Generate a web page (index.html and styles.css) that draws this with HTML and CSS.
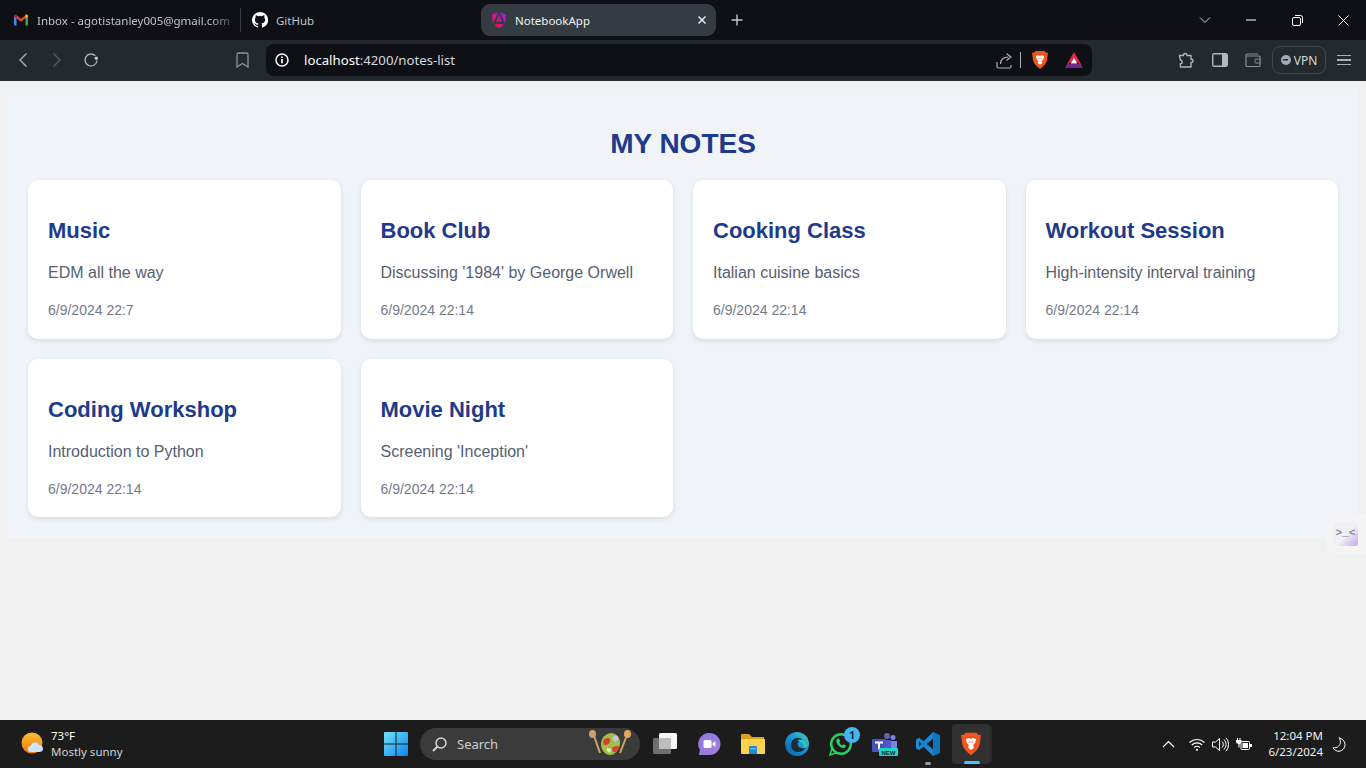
FILE: index.html
```html
<!DOCTYPE html>
<html lang="en">
<head>
<meta charset="utf-8">
<title>NotebookApp</title>
<link rel="stylesheet" href="styles.css">
</head>
<body>
<div class="window">
  <div class="tabstrip">
    <div class="tab tab-first">
      <svg class="fav" viewBox="0 0 16 16"><path fill="#4285f4" d="M1 13.500V4l2.500-.8V13.500H2a1 1 0 0 1-1-1z"/><path fill="#34a853" d="M12.500 13.500V3.200L15 4v8.500a1 1 0 0 1-1 1z"/><path fill="#ea4335" d="M3.500 3.200 8 6.700l4.500-3.500v3.100L8 9.800 3.500 6.300z"/><path fill="#c5221f" d="M1 4c0-1.300 1.500-2 2.500-1.200V6.300L1 4.500z"/><path fill="#fbbc04" d="M15 4c0-1.300-1.500-2-2.500-1.200V6.300L15 4.500z"/></svg>
      <span class="tab-title faded">Inbox - agotistanley005@gmail.com</span>
    </div>
    <div class="tab-sep"></div>
    <div class="tab tab-second">
      <svg class="fav" viewBox="0 0 16 16"><path fill="#fff" d="M8 0a8 8 0 0 0-2.530 15.590c.4.070.55-.170.55-.380v-1.340c-2.230.480-2.700-1.070-2.700-1.070-.360-.930-.890-1.170-.890-1.170-.730-.500.050-.490.050-.490.800.060 1.220.830 1.220.830.720 1.220 1.870.870 2.330.660.070-.520.280-.870.510-1.070-1.780-.200-3.640-.890-3.640-3.950 0-.870.310-1.590.820-2.150-.080-.200-.360-1.020.080-2.120 0 0 .670-.210 2.200.820a7.600 7.600 0 0 1 4 0c1.530-1.040 2.200-.820 2.200-.820.440 1.100.160 1.920.080 2.120.510.560.820 1.270.820 2.150 0 3.070-1.870 3.750-3.650 3.950.290.250.540.740.540 1.480v2.200c0 .210.150.460.550.380A8 8 0 0 0 8 0z"/></svg>
      <span class="tab-title">GitHub</span>
    </div>
    <div class="tab tab-active">
      <svg class="fav" viewBox="0 0 16 16"><defs><linearGradient id="ang" x1="0" y1="1" x2="1" y2="0"><stop offset="0" stop-color="#f0060b"/><stop offset=".5" stop-color="#e0129f"/><stop offset="1" stop-color="#7b1fe8"/></linearGradient></defs><path fill="url(#ang)" d="M6.900.2 1 2.400l.9 9.200zM9.100.2 15 2.400l-.9 9.200zM8 15.900l-4.300-2.500 1-1.500h6.600l1 1.500zM8 2.500l3 7.500H9.500L9 8.700H7L6.500 10H5zM8 5.300 7.400 7.300h1.200z" fill-rule="evenodd"/></svg>
      <span class="tab-title active-title">NotebookApp</span>
      <svg class="tab-close" viewBox="0 0 10 10"><path d="M1.500 1.500l7 7m0-7-7 7" stroke="#e8eaed" stroke-width="1.500" fill="none"/></svg>
    </div>
    <svg class="new-tab" viewBox="0 0 12 12"><path d="M6 .5v11M.5 6h11" stroke="#c4c7cb" stroke-width="1.400" fill="none"/></svg>
    <div class="win-controls">
      <span class="win-btn"><svg width="12" height="8" viewBox="0 0 12 8"><path d="M1 1.500l5 5 5-5" stroke="#d0d2d5" fill="none"/></svg></span>
      <span class="win-btn"><svg width="10" height="2" viewBox="0 0 10 2"><path d="M0 1h10" stroke="#fff" fill="none"/></svg></span>
      <span class="win-btn"><svg width="11" height="11" viewBox="0 0 11 11"><rect x=".5" y="2.500" width="8" height="8" rx="1.500" stroke="#fff" fill="none"/><path d="M3 .5h5.500a2 2 0 0 1 2 2V8" stroke="#fff" fill="none"/></svg></span>
      <span class="win-btn"><svg width="11" height="11" viewBox="0 0 11 11"><path d="M.5.500l10 10m0-10-10 10" stroke="#fff" fill="none"/></svg></span>
    </div>
  </div>

  <div class="toolbar">
    <span class="tool-btn"><svg width="10" height="16" viewBox="0 0 10 16"><path d="M8.500 1.500 2 8l6.500 6.500" stroke="#a9b0b5" stroke-width="1.400" fill="none"/></svg></span>
    <span class="tool-btn"><svg width="10" height="16" viewBox="0 0 10 16"><path d="M1.500 1.500 8 8l-6.500 6.500" stroke="#565d62" stroke-width="1.400" fill="none"/></svg></span>
    <span class="tool-btn"><svg width="16" height="16" viewBox="0 0 16 16"><path d="M14 8.500A6 6 0 1 1 12.300 3.800" stroke="#a9b0b5" stroke-width="1.400" fill="none"/><circle cx="13.300" cy="6.300" r="1.700" fill="#c5c9cc"/></svg></span>
    <span class="bookmark"><svg width="13" height="16" viewBox="0 0 13 16"><path d="M2.500 1h8A1.500 1.500 0 0 1 12 2.500V15l-5.500-3.500L1 15V2.500A1.500 1.500 0 0 1 2.500 1z" stroke="#8d959a" stroke-width="1.300" fill="none"/></svg></span>
    <div class="address">
      <svg class="info" width="14" height="14" viewBox="0 0 14 14"><circle cx="7" cy="7" r="6" stroke="#fff" stroke-width="1.500" fill="none"/><path d="M7 6v4.200M7 3.500v1.500" stroke="#fff" stroke-width="1.700" fill="none"/></svg>
      <span class="url"><b>localhost</b>:4200/notes-list</span>
      <svg class="share" width="17" height="17" viewBox="0 0 17 17"><path d="M1 10v4.500A1.500 1.500 0 0 0 2.500 16h11a1.500 1.500 0 0 0 1.500-1.500V13M4.500 12c0-4.500 3-7 8-7M10.500 1.500 15 5l-4.500 3.500" stroke="#a9b0b5" stroke-width="1.200" fill="none"/></svg>
      <span class="addr-sep"></span>
      <svg class="brave-small" width="16" height="18" viewBox="0 0 16 18"><path fill="#f0551e" d="M3.500 0h9l1.500 1.800L16 1.500 15 9c-.5 3-3 6-7 9-4-3-6.500-6-7-9L0 1.500l2 .3z"/><path fill="#fff" d="M4 5l2.500-.8L8 5l1.500-.8L12 5l-.6 3-1.700 2 .6 2-2.300 1.800L5.700 12l.6-2-1.700-2z"/><path fill="#f0551e" d="M6.500 7h1v1h-1zM8.500 7h1v1h-1z"/></svg>
      <svg class="bat" width="18" height="16" viewBox="0 0 18 16"><path fill="#6b2a8a" d="M0 16h18l-2.500-4.300h-13z"/><path fill="#e8264c" d="M9 0 1 14l4-3.500h8l4 3.500z"/><path fill="#fff" d="M9 6l3.200 5.500H5.800z"/></svg>
    </div>
    <span class="ext ext-puzzle"><svg width="17" height="17" viewBox="0 0 17 17"><path d="M1.500 3.500H5.500C5 1 9 .5 9 3.500h4v3.800c2.500-.5 3 3.500 0 3.200V15H2.500l-.2-3.300C5 12 4.500 7.800 2.300 8z" stroke="#b1b8bc" stroke-width="1.400" fill="none" stroke-linejoin="round"/></svg></span>
    <span class="ext"><svg width="16" height="14" viewBox="0 0 16 14"><rect x=".7" y=".7" width="14.600" height="12.600" rx="1.500" stroke="#b1b8bc" stroke-width="1.400" fill="none"/><rect x="10" y="1" width="5" height="12" fill="#b1b8bc"/></svg></span>
    <span class="ext"><svg width="16" height="14" viewBox="0 0 16 14"><path d="M2 3h12a1 1 0 0 1 1 1v8.500a1 1 0 0 1-1 1H2a1 1 0 0 1-1-1V2.500A1.500 1.500 0 0 1 2.500 1H13" stroke="#899095" stroke-width="1.200" fill="none"/><rect x="10" y="6" width="5" height="4" rx="1" stroke="#899095" fill="#23292d"/></svg></span>
    <span class="vpn"><i class="vpn-dot"></i>VPN</span>
    <span class="menu"><i></i><i></i><i></i></span>
  </div>

  <div class="viewport">
    <main class="notes">
      <h1 class="notes-heading">MY NOTES</h1>
      <div class="notes-grid">
        <article class="card"><h2 class="card-title">Music</h2><p class="card-body">EDM all the way</p><p class="card-date">6/9/2024 22:7</p></article>
        <article class="card"><h2 class="card-title">Book Club</h2><p class="card-body">Discussing '1984' by George Orwell</p><p class="card-date">6/9/2024 22:14</p></article>
        <article class="card"><h2 class="card-title">Cooking Class</h2><p class="card-body">Italian cuisine basics</p><p class="card-date">6/9/2024 22:14</p></article>
        <article class="card"><h2 class="card-title">Workout Session</h2><p class="card-body">High-intensity interval training</p><p class="card-date">6/9/2024 22:14</p></article>
        <article class="card"><h2 class="card-title">Coding Workshop</h2><p class="card-body">Introduction to Python</p><p class="card-date">6/9/2024 22:14</p></article>
        <article class="card"><h2 class="card-title">Movie Night</h2><p class="card-body">Screening 'Inception'</p><p class="card-date">6/9/2024 22:14</p></article>
      </div>
    </main>
    <div class="float-widget"><span class="float-inner">&gt;_&lt;</span></div>
  </div>

  <footer class="taskbar">
    <div class="weather">
      <svg width="24" height="24" viewBox="0 0 24 24"><defs><linearGradient id="sun" x1="0" y1="0" x2="0" y2="1"><stop offset="0" stop-color="#fbbd2e"/><stop offset="1" stop-color="#f07a12"/></linearGradient></defs><circle cx="11" cy="11" r="10.500" fill="url(#sun)"/><path fill="#cfe2fb" d="M10 20a3 3 0 0 1-.3-6 4.500 4.500 0 0 1 8.500-1 3.500 3.500 0 0 1 3.800 3.500A3.500 3.500 0 0 1 19 20z"/></svg>
      <div class="weather-text"><span class="temp">73°F</span><span class="cond">Mostly sunny</span></div>
    </div>
    <div class="task-center">
      <span class="task-icon"><svg width="24" height="24" viewBox="0 0 24 24"><defs><linearGradient id="win" x1="0" y1="0" x2="1" y2="1"><stop offset="0" stop-color="#6fe3fb"/><stop offset="1" stop-color="#0a86f0"/></linearGradient></defs><path fill="url(#win)" d="M1 0h10.500v11.500H0V1a1 1 0 0 1 1-1zM12.500 0H23a1 1 0 0 1 1 1v10.500H12.500zM0 12.500h11.500V24H1a1 1 0 0 1-1-1zM12.500 12.500H24V23a1 1 0 0 1-1 1H12.500z"/></svg></span>
      <div class="search">
        <svg width="15" height="15" viewBox="0 0 15 15"><circle cx="9" cy="6" r="5" stroke="#d8d8d8" stroke-width="1.500" fill="none"/><path d="M5.500 9.500 1 14" stroke="#d8d8d8" stroke-width="1.800" fill="none"/></svg>
        <span class="search-label">Search</span>
        <svg class="salad" width="46" height="30" viewBox="0 0 46 30"><path d="M6 7l6 17M39 6l-7 18" stroke="#d3a263" stroke-width="2" fill="none"/><ellipse cx="4.500" cy="5" rx="3.500" ry="4" fill="#c9a172"/><ellipse cx="39.500" cy="5" rx="3.500" ry="4" fill="#e0a860"/><path fill="#9fbe4a" d="M13 15c0-6 5-11 10-11s10 5 9 11c-1 6-5 11-10 11s-9-5-9-11z"/><path fill="#d8412e" d="M15 13c1-4 5-5 7-3 1 3-2 7-6 6zM24 19c2-2 6-3 7-1 0 3-3 6-6 5z"/><path fill="#c9c3dd" d="M25 8c2-2 4-2 5 0 1 2-1 5-3 5-2-1-3-3-2-5z"/><path fill="#e8efd4" d="M19 19l4 1-1 4-3-2z"/></svg>
      </div>
      <span class="task-icon task-view"><svg width="24" height="24" viewBox="0 0 24 24"><rect x="0" y="6" width="18" height="16" rx="1.500" fill="#6f6f6f"/><rect x="6" y="1" width="18" height="16" rx="1.500" fill="#f6f6f6"/><rect x="6" y="6" width="12" height="11" fill="#bdbdbd"/></svg></span>
      <span class="task-icon"><svg width="24" height="24" viewBox="0 0 24 24"><defs><linearGradient id="chat" x1="0" y1="0" x2="1" y2="1"><stop offset="0" stop-color="#8a7be8"/><stop offset="1" stop-color="#a77bd8"/></linearGradient></defs><path fill="url(#chat)" d="M12.500 1a11 11 0 0 1 0 22H3c-1 0-1.500-.6-1-1.500L3 18A11 11 0 0 1 12.500 1z"/><rect x="6.500" y="8" width="8" height="8" rx="1.500" fill="#fff"/><path fill="#fff" d="M15.500 11l3-2v6l-3-2z"/></svg></span>
      <span class="task-icon"><svg width="24" height="24" viewBox="0 0 24 24"><path fill="#d9a520" d="M0 3a1 1 0 0 1 1-1h7l3 3h12v3H0z"/><path fill="#fbd24e" d="M0 7h24v14a1 1 0 0 1-1 1H1a1 1 0 0 1-1-1z"/><path fill="#2088d8" d="M8 15a1 1 0 0 1 1-1h6a1 1 0 0 1 1 1v7H8z"/><path fill="#55b6f0" d="M9 16h6v1.500H9z"/></svg></span>
      <span class="task-icon"><svg width="24" height="24" viewBox="0 0 24 24"><defs><linearGradient id="edge" x1="0" y1="1" x2="1" y2="0"><stop offset="0" stop-color="#0c59a4"/><stop offset=".6" stop-color="#1b9de2"/><stop offset="1" stop-color="#4fd4a0"/></linearGradient></defs><circle cx="12" cy="12" r="12" fill="url(#edge)"/><path fill="#1c1c1c" d="M23.500 14c-1 1.800-3.500 2.500-6 2.300-3-.2-5-2-5-4.300 0-2.700 3-3.300 6-2.300-1.500-3.500-5-4.500-8-3.500C7 7.300 5.500 10.500 6 14c.5 3.500 3.500 6 7 6 3 0 5-1 6.500-2.500z" opacity=".85"/><path fill="#39c8a8" d="M12.500 8c4-1 8 0 9 5 1 2-1 3-3.500 3 2-1.500 1-5-2-6-1.500-.5-3-1-3.500-2z"/></svg></span>
      <span class="task-icon wa"><svg width="24" height="24" viewBox="0 0 24 24"><circle cx="12" cy="12" r="9.800" stroke="#27d366" stroke-width="2.400" fill="#1c1c1c"/><path fill="#1c1c1c" stroke="#27d366" stroke-width="1.500" d="M1 23l1.800-6 4 4z"/><path fill="#27d366" d="M8.500 6.800l1.600-.3 1 2.700-1 1.200c.7 1.300 1.700 2.300 3.100 3l1.200-1.200 2.500 1.200-.3 1.700c-.8 1-2.500 1.300-4.500.3-2.500-1.200-4.300-3.200-4.700-5.600-.2-1.300.2-2.300 1.100-3z"/></svg><span class="badge">1</span></span>
      <span class="task-icon"><svg width="26" height="26" viewBox="0 0 26 26"><circle cx="15" cy="5" r="3" fill="#6264a7"/><circle cx="21" cy="6.500" r="2.500" fill="#7b83eb"/><path fill="#7b83eb" d="M17 10h8v8a3 3 0 0 1-3 3h-5z"/><path fill="#5059c9" d="M11 9h8v12h-8z"/><rect x="0" y="8" width="14" height="13" rx="1" fill="#4b53bc"/><path fill="#fff" d="M3 10.500h8v2H8v6H6v-6H3z"/><rect x="7" y="17" width="19" height="8" rx="1" fill="#1fd6c4"/><text class="new-tag" x="16.500" y="23.500" text-anchor="middle">NEW</text></svg></span>
      <span class="task-icon vscode"><svg width="24" height="24" viewBox="0 0 24 24"><path fill="#1b87d2" d="M17 0l7 3.200v17.600L17 24l-9.500-9.200L3 18.300 0 16.500v-9L3 5.700l4.500 3.500zM17 6.800 10.800 12l6.200 5.200zM3 9.500v5L5.500 12z"/><path fill="#0f6fb5" d="M17 0l7 3.200v17.600L17 24z" opacity=".75"/></svg><i class="run-dot"></i></span>
      <span class="task-icon brave-task"><svg width="20" height="24" viewBox="0 0 16 18"><path fill="#f0551e" d="M3.500 0h9l1.500 1.800L16 1.500 15 9c-.5 3-3 6-7 9-4-3-6.500-6-7-9L0 1.500l2 .3z"/><path fill="#fff" d="M4 5l2.500-.8L8 5l1.500-.8L12 5l-.6 3-1.700 2 .6 2-2.300 1.800L5.700 12l.6-2-1.700-2z"/><path fill="#f0551e" d="M6.500 7h1v1h-1zM8.500 7h1v1h-1z"/></svg><i class="active-bar"></i></span>
    </div>
    <div class="tray">
      <svg class="tray-chev" width="13" height="8" viewBox="0 0 13 8"><path d="M1 7l5.500-5.500L12 7" stroke="#fff" stroke-width="1.200" fill="none"/></svg>
      <svg class="tray-wifi" width="16" height="13" viewBox="0 0 16 13"><path d="M.5 4.500a11 11 0 0 1 15 0M2.800 7a7.500 7.500 0 0 1 10.400 0M5.200 9.500a4 4 0 0 1 5.600 0" stroke="#fff" stroke-width="1.100" fill="none"/><circle cx="8" cy="11.800" r="1.100" fill="#fff"/></svg>
      <svg class="tray-vol" width="17" height="15" viewBox="0 0 17 15"><path d="M.5 5v5h3l4 3.500v-12l-4 3.500zM10 4.500a4 4 0 0 1 0 6M12 2.500a7 7 0 0 1 0 10M14 .8a10 10 0 0 1 0 13.400" stroke="#fff" fill="none"/></svg>
      <svg class="tray-bat" width="16" height="13" viewBox="0 0 16 13"><path d="M1 0h1v2H1zM3.500 0h1v2h-1zM0 2h5.500v2.500L3.500 6.500v3h-1v-3L0 4.500z" fill="#fff"/><rect x="5" y="3.500" width="8.500" height="8" rx="1" stroke="#fff" fill="#1c1c1c"/><rect x="6.500" y="5" width="5.500" height="5" fill="#fff"/><rect x="14" y="6" width="2" height="3" fill="#fff"/></svg>
      <div class="clock"><span>12:04 PM</span><span>6/23/2024</span></div>
      <svg class="tray-moon" width="14" height="15" viewBox="0 0 14 15"><path d="M7 .8c2 3 2 6-.5 8.500C5 10.700 3 11 1 10.800c1.200 2.300 3.500 3.500 6 3.500a6.500 6.500 0 0 0 6-7c-.2-3-2.500-5.800-6-6.500z" stroke="#fff" fill="none"/></svg>
    </div>
  </footer>
</div>
</body>
</html>
```

FILE: styles.css
```css
* { box-sizing: border-box; }
html, body { margin: 0; padding: 0; height: 100%; overflow: hidden; }
body { font-family: "Noto Sans", "Open Sans", sans-serif; background: #f0f0f0; }
.window { height: 768px; display: flex; flex-direction: column; }

/* tab strip */
.tabstrip { height: 40px; flex: none; background: #0e1015; display: flex; align-items: center; color: #c0c3c7; font-size: 11.500px; }
.tab { display: flex; align-items: center; height: 32px; flex: none; }
.fav { width: 16px; height: 16px; flex: none; }
.tab-first { width: 240px; padding-left: 13px; }
.tab-second { width: 240px; padding-left: 11px; }
.tab-title { margin-left: 8px; white-space: nowrap; }
.tab-first .tab-title { -webkit-mask-image: linear-gradient(90deg, #000 90%, rgba(0, 0, 0, .35)); mask-image: linear-gradient(90deg, #000 90%, rgba(0, 0, 0, .35)); }
.tab-sep { width: 1px; height: 24px; background: #3a3e42; flex: none; }
.tab-active { width: 235px; padding: 0 9px 0 10px; background: #343c42; border-radius: 9px; }
.active-title { color: #f1f3f4; flex: 1; }
.tab-close { width: 10px; height: 10px; }
.new-tab { width: 12px; height: 12px; margin-left: 15px; flex: none; }
.win-controls { margin-left: auto; display: flex; }
.win-btn { width: 46px; height: 40px; display: flex; align-items: center; justify-content: center; }

/* toolbar */
.toolbar { height: 41px; flex: none; background: #23292d; display: flex; align-items: center; padding: 0 0 1px 6px; color: #d5d8da; }
.tool-btn { width: 34px; display: flex; justify-content: center; flex: none; }
.bookmark { margin-left: 128px; width: 13px; display: flex; flex: none; }
.address { margin-left: 17px; width: 826px; height: 32px; flex: none; background: #0e1015; border-radius: 8px; display: flex; align-items: center; padding-left: 9px; }
.url { margin-left: 15px; font-size: 13.200px; color: #d8dadc; white-space: nowrap; }
.url b { font-weight: 400; color: #fff; }
.share { margin-left: auto; }
.addr-sep { width: 1px; height: 16px; background: #a9b0b5; margin: 0 11px 0 7px; }
.bat { margin: 0 9px 0 17px; }
.ext { width: 33px; display: flex; justify-content: center; flex: none; }
.ext-puzzle { margin-left: 78px; }
.vpn { margin-left: 3px; width: 54px; height: 28px; flex: none; border: 1px solid #42494e; border-radius: 8px; display: flex; align-items: center; justify-content: center; font-size: 12px; color: #d5d8da; }
.vpn-dot { width: 10px; height: 10px; border-radius: 50%; margin-right: 3px; background: linear-gradient(#23292d, #23292d) center / 5px 1.500px no-repeat #a4a9b8; }
.menu { margin-left: 11px; width: 14px; display: flex; flex-direction: column; gap: 3px; flex: none; }
.menu i { display: block; height: 1.500px; background: #a9b0b5; }

/* page */
.viewport { flex: 1; position: relative; padding: 8px; background: #f0f0f0; min-height: 0; }
.notes { background: #f0f4f8; padding: 20px 20px 20.500px; font-family: "Liberation Sans", Arial, sans-serif; }
.notes-heading { margin: 18.760px 0 20.300px; text-align: center; font-size: 28px; font-weight: 700; color: #1e3a8a; }
.notes-grid { display: grid; grid-template-columns: repeat(4, 1fr); gap: 20px; }
.card { background: #fff; border-radius: 10px; padding: 20px 20px 20.300px; box-shadow: 0 2px 5px rgba(0, 0, 0, .1); }
.card-title { margin: 18.260px 0 20px; font-size: 22px; font-weight: 700; color: #1e3a8a; }
.card-body { margin: 0 0 20px; font-size: 16px; color: #566072; }
.card-date { margin: 0; font-size: 14px; color: #737a87; }
.float-widget { position: absolute; right: 0; top: 433px; width: 40px; height: 39px; background: #f4f4f4; border-radius: 6px 0 0 6px; display: flex; align-items: center; }
.float-inner { margin-left: 7px; width: 25px; height: 24px; border-radius: 3px; background: linear-gradient(135deg, #eef0f6 55%, #c7a4e8); color: #8a8d96; font: 700 11px/22px "Liberation Mono", monospace; text-align: center; }

/* taskbar */
.taskbar { height: 48px; flex: none; background: #1c1c1c; display: flex; align-items: center; color: #fff; font-size: 12px; }
.weather { width: 374px; flex: none; padding-left: 21px; display: flex; align-items: center; gap: 6px; }
.weather-text { display: flex; flex-direction: column; line-height: 16px; font-size: 11.500px; }
.temp { color: #fff; }
.cond { color: #d4d4d4; }
.task-center { display: flex; align-items: center; flex: none; }
.task-icon { width: 44px; height: 48px; flex: none; display: flex; align-items: center; justify-content: center; position: relative; }
.search { width: 220px; height: 32px; margin: 0 3px 0 2px; background: #3b3b3b; border-radius: 16px; display: flex; align-items: center; padding-left: 12px; flex: none; position: relative; }
.search-label { margin-left: 10px; font-size: 13px; color: #cfcfcf; }
.salad { position: absolute; right: 6px; top: 1px; }
.new-tag { font: 700 6px "Liberation Sans", sans-serif; fill: #123; }
.badge { position: absolute; right: 3px; top: 7px; width: 16px; height: 16px; border-radius: 50%; background: #45b5ee; color: #123; font-size: 10px; font-weight: 700; line-height: 16px; text-align: center; }
.vscode { width: 42px; }
.run-dot { position: absolute; bottom: 3px; left: 18px; width: 6px; height: 3px; border-radius: 2px; background: #9a9a9a; }
.brave-task { background: #303030; width: 38px; height: 40px; margin-left: 3px; border-radius: 4px; box-shadow: 3px 0 0 -1px #2a2a2a; }
.active-bar { position: absolute; bottom: 0; left: 12px; width: 16px; height: 3px; border-radius: 2px; background: #4cc2ff; }
.tray { margin-left: auto; display: flex; align-items: center; padding-right: 20px; }
.tray-chev { margin-right: 14px; }
.tray-vol { margin: 0 7px; }
.clock { margin-left: 16px; display: flex; flex-direction: column; align-items: flex-end; line-height: 16px; font-size: 11.500px; color: #f2f2f2; }
.tray-moon { margin-left: 9px; }
```
